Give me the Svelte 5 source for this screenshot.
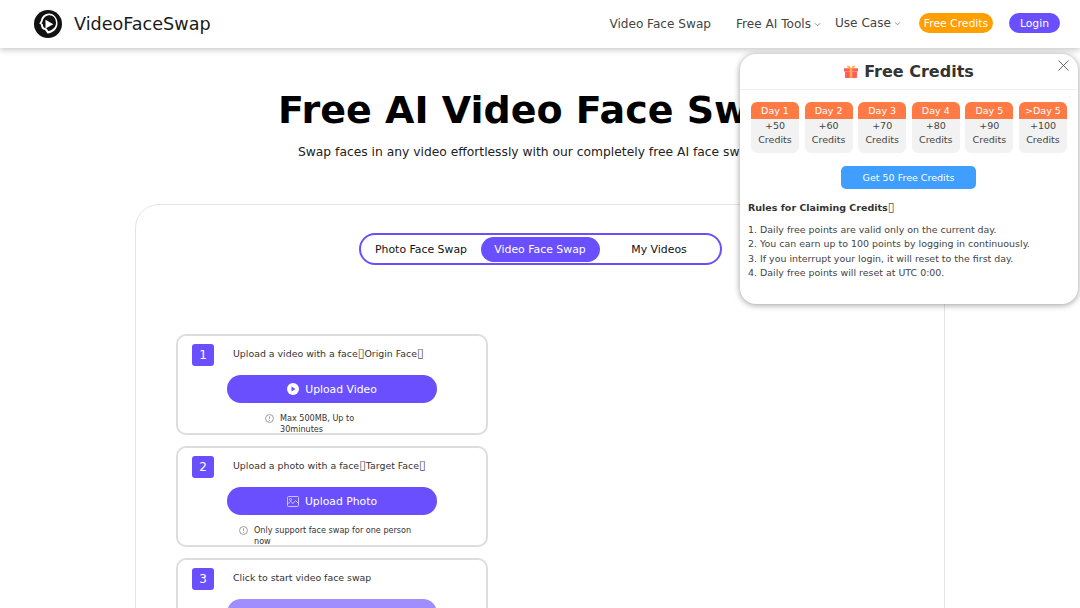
<script lang="ts">
  const days = [
    { day: 'Day 1', credits: '+50' },
    { day: 'Day 2', credits: '+60' },
    { day: 'Day 3', credits: '+70' },
    { day: 'Day 4', credits: '+80' },
    { day: 'Day 5', credits: '+90' },
    { day: '>Day 5', credits: '+100' }
  ]
  const rules = [
    '1. Daily free points are valid only on the current day.',
    '2. You can earn up to 100 points by logging in continuously.',
    '3. If you interrupt your login, it will reset to the first day.',
    '4. Daily free points will reset at UTC 0:00.'
  ]
</script>

<div class="page">
  <header class="topbar">
    <a class="brand" href="#top">
      <svg width="28" height="28" viewBox="0 0 28 28">
        <circle cx="14" cy="14" r="14" fill="#111" />
        <path d="M15 3.500c-4.200 0-7.500 3-8 7L5.300 13.500l1.700 1.200c-.2 3 1.500 5 4 5.300l2.500 3.500c5.500-.5 10-4.500 10-10 0-5.500-3.500-10-8.500-10z" fill="#fff" />
        <path d="M15.500 5.300c-3.500 0-6.500 2.700-6.800 6l-1.200 2 1.300 1c0 2.700 1.400 3.900 3.500 4l2 2.800c4.200-.8 7.700-4 7.700-8.100 0-4.300-2.500-7.700-6.500-7.700z" fill="#111" />
        <path d="M11.500 9.800l7.800 4.400-7.800 4.400z" fill="#fff" />
      </svg>
      <span>VideoFaceSwap</span>
    </a>
    <nav class="nav">
      <a class="link first" href="#top">Video Face Swap</a>
      <a class="link tools" href="#top">Free AI Tools<svg class="chev" width="7" height="7" viewBox="0 0 8 8"><path d="M1 2.500l3 3 3-3" /></svg></a>
      <a class="link case" href="#top">Use Case<svg class="chev" width="7" height="7" viewBox="0 0 8 8"><path d="M1 2.500l3 3 3-3" /></svg></a>
      <button class="pill orange">Free Credits</button>
      <button class="pill purple">Login</button>
    </nav>
  </header>

  <main class="main">
    <h1>Free AI Video Face Swap</h1>
    <p class="sub">Swap faces in any video effortlessly with our completely free AI face swap tool</p>

    <section class="card">
      <div class="tabs">
        <button class="tab">Photo Face Swap</button>
        <button class="tab active">Video Face Swap</button>
        <button class="tab">My Videos</button>
      </div>

      <div class="steps">
        <div class="step">
          <div class="step-head"><span class="num">1</span><span class="label">Upload a video with a face<span class="tofu">▯</span>Origin Face<span class="tofu">▯</span></span></div>
          <button class="upload">
            <svg width="12" height="12" viewBox="0 0 12 12"><circle cx="6" cy="6" r="6" fill="#fff" /><path d="M4.500 3.400l4 2.600-4 2.600z" fill="#6a4fff" /></svg>
            Upload Video
          </button>
          <div class="note one">
            <svg class="info" width="9" height="9" viewBox="0 0 10 10"><circle cx="5" cy="5" r="4.400" /><path d="M5 2.500v3M5 6.800v1" /></svg>
            <span>Max 500MB, Up to 30minutes</span>
          </div>
        </div>

        <div class="step">
          <div class="step-head"><span class="num">2</span><span class="label">Upload a photo with a face<span class="tofu">▯</span>Target Face<span class="tofu">▯</span></span></div>
          <button class="upload">
            <svg class="pic" width="12" height="11" viewBox="0 0 12 11"><rect x=".5" y=".5" width="11" height="10" rx="1" /><circle cx="3.500" cy="3.500" r="1" /><path d="M.5 8l3-2.500 2.500 2 2.500-3 3 3" /></svg>
            Upload Photo
          </button>
          <div class="note two">
            <svg class="info" width="9" height="9" viewBox="0 0 10 10"><circle cx="5" cy="5" r="4.400" /><path d="M5 2.500v3M5 6.800v1" /></svg>
            <span>Only support face swap for one person now</span>
          </div>
        </div>

        <div class="step">
          <div class="step-head"><span class="num">3</span><span class="label">Click to start video face swap</span></div>
          <div class="upload faded"></div>
        </div>
      </div>
    </section>
  </main>

  <aside class="popup">
    <button class="close" aria-label="Close">
      <svg width="11" height="11" viewBox="0 0 11 11"><path d="M.5.500l10 10M10.500.500l-10 10" /></svg>
    </button>
    <div class="popup-title">
      <svg width="14" height="13" viewBox="0 0 13 12">
        <rect x="0" y="3" width="13" height="3" fill="#ff5b5b" />
        <rect x="1" y="6" width="11" height="6" fill="#ff5b5b" />
        <rect x="5.300" y="3" width="2.400" height="9" fill="#ffb13d" />
        <path d="M6.500 3C5 0 3 0 2.800 1.200 2.700 2.500 4.500 3 6.500 3zM6.500 3C8 0 10 0 10.200 1.200 10.300 2.500 8.500 3 6.500 3z" fill="#ffb13d" />
      </svg>
      <span>Free Credits</span>
    </div>
    <div class="days">
      {#each days as d}
        <div class="day">
          <div class="day-head">{d.day}</div>
          <div class="day-body">{d.credits}<br />Credits</div>
        </div>
      {/each}
    </div>
    <button class="get">Get 50 Free Credits</button>
    <h4>Rules for Claiming Credits<span class="tofu">▯</span></h4>
    <ol>
      {#each rules as r}
        <li>{r}</li>
      {/each}
    </ol>
  </aside>
</div>

<style>
  :global(body) {
    margin: 0;
    background: #fff;
  }
  .page {
    position: relative;
    height: 608px;
    overflow: hidden;
    font-family: 'DejaVu Sans', sans-serif;
    color: #333;
  }
  a {
    text-decoration: none;
    color: inherit;
  }
  button {
    font-family: inherit;
    border: none;
    cursor: pointer;
    padding: 0;
  }
  .topbar {
    height: 48px;
    display: flex;
    align-items: center;
    justify-content: space-between;
    padding: 0 20px 0 34px;
    box-shadow: 0 2px 6px rgba(0, 0, 0, 0.22);
    position: relative;
  }
  .brand {
    display: flex;
    align-items: center;
    gap: 12px;
    font-size: 17.600px;
    color: #1a1a1a;
  }
  .nav {
    display: flex;
    align-items: center;
    font-size: 12.100px;
    color: #444;
  }
  .link {
    display: flex;
    align-items: center;
    gap: 3px;
  }
  .tools {
    margin-left: 25px;
  }
  .case {
    margin-left: 14px;
    position: relative;
    top: -1px;
  }
  .chev {
    fill: none;
    stroke: #777;
    stroke-width: 0.9;
  }
  .pill {
    height: 20px;
    border-radius: 10px;
    color: #fff;
    font-size: 10.800px;
    position: relative;
    top: -1px;
  }
  .orange {
    width: 74px;
    margin-left: 18px;
    background: #ffa000;
  }
  .purple {
    width: 51px;
    margin-left: 16px;
    background: #6a4fff;
  }

  .main {
    display: flex;
    flex-direction: column;
    align-items: center;
  }
  h1 {
    margin: 39px 0 0;
    font-size: 38px;
    line-height: 46px;
    color: #000;
    white-space: nowrap;
  }
  .sub {
    margin: 10px 0 0;
    font-size: 12.300px;
    line-height: 18px;
    color: #222;
    white-space: nowrap;
  }
  .card {
    width: 810px;
    box-sizing: border-box;
    margin-top: 43px;
    padding: 28px 40px 0;
    border: 1px solid #e4e4e4;
    border-radius: 24px;
    height: 600px;
  }
  .tabs {
    width: 363px;
    height: 32px;
    box-sizing: border-box;
    margin: 0 auto;
    padding: 2px 0 0 1px;
    border: 2px solid #6a4fff;
    border-radius: 16px;
    display: flex;
    justify-content: flex-start;
  }
  .tab {
    width: 119px;
    height: 25px;
    border-radius: 13px;
    background: none;
    color: #111;
    font-size: 10.900px;
  }
  .tab.active {
    background: #6a4fff;
    color: #fff;
  }
  .steps {
    margin-top: 69px;
    width: 312px;
    display: flex;
    flex-direction: column;
    gap: 11px;
  }
  .step {
    height: 101px;
    box-sizing: border-box;
    padding: 8px 14px 0;
    border: 2px solid #ddd;
    border-radius: 10px;
    overflow: hidden;
    flex: none;
  }
  .step-head {
    display: flex;
    align-items: center;
    gap: 19px;
    font-size: 9.400px;
    color: #333;
  }
  .label {
    margin-top: -3px;
  }
  .tofu {
    font-size: 1.300em;
    line-height: 1;
    color: #555;
  }
  .num {
    width: 22px;
    height: 22px;
    border-radius: 3px;
    background: #6a4fff;
    color: #fff;
    font-size: 12px;
    display: flex;
    align-items: center;
    justify-content: center;
  }
  .upload {
    display: flex;
    align-items: center;
    justify-content: center;
    gap: 6px;
    width: 210px;
    height: 28px;
    margin: 9px 0 0 35px;
    background: #6a4fff;
    color: #fff;
    border-radius: 14px;
    font-size: 10.800px;
  }
  .upload.faded {
    background: #a08dff;
  }
  .pic {
    fill: none;
    stroke: #e6e0ff;
    stroke-width: 0.8;
  }
  .note {
    display: flex;
    gap: 6px;
    margin-top: 10px;
    font-size: 8.100px;
    line-height: 11px;
    color: #333;
  }
  .note.one {
    margin-left: 73px;
    width: 110px;
  }
  .note.two {
    margin-left: 47px;
    width: 175px;
  }
  .info {
    flex: none;
    margin-top: 1px;
    fill: none;
    stroke: #666;
    stroke-width: 0.7;
  }

  .popup {
    position: absolute;
    left: 740px;
    top: 54px;
    width: 338px;
    height: 250px;
    box-sizing: border-box;
    background: #fff;
    border-radius: 16px;
    box-shadow: 0 1px 6px rgba(0, 0, 0, 0.4);
  }
  .close {
    position: absolute;
    right: 9px;
    top: 6px;
    background: none;
    line-height: 0;
  }
  .close svg {
    fill: none;
    stroke: #555;
    stroke-width: 0.9;
  }
  .popup-title {
    height: 36px;
    box-sizing: border-box;
    border-bottom: 1px solid #f0f0f0;
    display: flex;
    align-items: center;
    justify-content: center;
    gap: 6px;
    font-size: 16px;
    font-weight: 700;
    color: #333;
  }
  .days {
    display: flex;
    justify-content: space-between;
    margin: 12px 11px 0;
  }
  .day {
    width: 48px;
    height: 51px;
    border-radius: 6px;
    background: #f2f2f2;
    overflow: hidden;
    text-align: center;
    font-size: 9.500px;
    color: #444;
  }
  .day-head {
    height: 17px;
    line-height: 17px;
    background: #ff7a45;
    color: #fff;
  }
  .day-body {
    line-height: 14px;
  }
  .get {
    display: block;
    width: 135px;
    height: 23px;
    margin: 13px 0 0 101px;
    background: #409eff;
    color: #fff;
    border-radius: 5px;
    font-size: 9.500px;
  }
  h4 {
    margin: 12px 0 0 8px;
    font-size: 9.500px;
    line-height: 12px;
    color: #333;
  }
  ol {
    list-style: none;
    margin: 9px 0 0 8px;
    padding: 0;
    font-size: 9.450px;
    line-height: 14.300px;
    color: #444;
  }
</style>
